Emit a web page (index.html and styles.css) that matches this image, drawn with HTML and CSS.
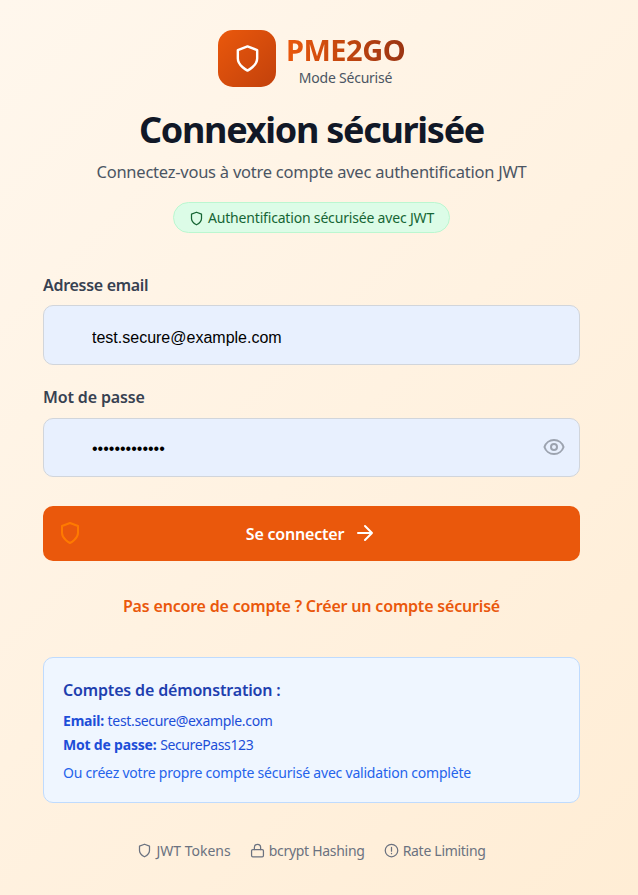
FILE: index.html
```html
<!DOCTYPE html>
<html lang="fr">
<head>
<meta charset="utf-8">
<title>PME2GO</title>
<link rel="stylesheet" href="styles.css">
</head>
<body>
<svg class="sprite" aria-hidden="true">
  <symbol id="shield" viewBox="0 0 24 24"><path d="M12 22s8-4 8-10V5l-8-3-8 3v7c0 6 8 10 8 10z"/></symbol>
</svg>
<main class="page">
  <header class="brand">
    <div class="logo"><svg class="icon"><use href="#shield"/></svg></div>
    <div class="brand-text">
      <div class="name"><span>PME2GO</span></div>
      <div class="mode"><span>Mode Sécurisé</span></div>
    </div>
  </header>
  <h1><span>Connexion sécurisée</span></h1>
  <p class="subtitle"><span>Connectez-vous à votre compte avec authentification JWT</span></p>
  <div class="badge"><svg class="icon"><use href="#shield"/></svg><span>Authentification sécurisée avec JWT</span></div>
  <form>
    <label class="label-email" for="email"><span>Adresse email</span></label>
    <div class="field"><input id="email" type="text" value="test.secure@example.com"></div>
    <label class="label-password" for="password"><span>Mot de passe</span></label>
    <div class="field password">
      <input id="password" type="password" value="SecurePass123">
      <svg class="icon eye" viewBox="0 0 24 24"><path d="M2.458 12C3.732 7.943 7.523 5 12 5s8.268 2.943 9.542 7c-1.274 4.057-5.064 7-9.542 7s-8.268-2.943-9.542-7z"/><circle cx="12" cy="12" r="3"/></svg>
    </div>
    <button type="button" class="submit">
      <svg class="icon lead"><use href="#shield"/></svg>
      <span>Se connecter</span>
      <svg class="icon arrow" viewBox="0 0 24 24"><path d="M5 12h14M12 5l7 7-7 7"/></svg>
    </button>
  </form>
  <div class="register"><span>Pas encore de compte ? Créer un compte sécurisé</span></div>
  <section class="demo">
    <h2><span>Comptes de démonstration :</span></h2>
    <p class="demo-email"><strong>Email:</strong> <span>test.secure@example.com</span></p>
    <p class="demo-password"><strong>Mot de passe:</strong> <span>SecurePass123</span></p>
    <p class="note"><span>Ou créez votre propre compte sécurisé avec validation complète</span></p>
  </section>
  <footer>
    <div class="tokens"><svg class="icon"><use href="#shield"/></svg><span>JWT Tokens</span></div>
    <div><svg class="icon" viewBox="0 0 24 24"><rect x="2.5" y="10.5" width="19" height="11.5" rx="2"/><path d="M7 10.5V7a5 5 0 0 1 10 0v3.5"/></svg><span>bcrypt Hashing</span></div>
    <div><svg class="icon" viewBox="0 0 24 24"><circle cx="12" cy="12" r="10"/><path d="M12 7v6M12 16.5v.5"/></svg><span>Rate Limiting</span></div>
  </footer>
</main>
</body>
</html>
```
FILE: styles.css
```css
* { box-sizing: border-box; }
body {
  margin: 0;
  min-height: 895px;
  background: linear-gradient(135deg, #fff7ed, #ffedd5);
  font-family: "Noto Sans", "Open Sans", sans-serif;
  color: #374151;
}
.sprite { display: none; }
.icon { fill: none; stroke: currentColor; stroke-width: 2; stroke-linecap: round; stroke-linejoin: round; flex: none; }
h1, h2, p { margin: 0; }
span { white-space: nowrap; }
.page { display: flex; flex-direction: column; height: 895px; padding: 30px 58px 0 43px; }
.brand { display: flex; justify-content: center; gap: 10px; height: 57px; }
.logo { width: 58px; height: 57px; border-radius: 15px; background: linear-gradient(135deg, #ea580c, #c2410c); display: flex; align-items: center; justify-content: center; color: #fff; }
.logo .icon { width: 29px; height: 29px; }
.brand-text { width: 119px; text-align: center; }
.name { font-size: 29px; line-height: 40px; font-weight: 700; letter-spacing: -0.5px; }
.name span { background: linear-gradient(90deg, #ea580c, #9a3412); -webkit-background-clip: text; background-clip: text; color: transparent; }
.mode { font-size: 14px; line-height: 16px; color: #4b5563; letter-spacing: -0.23px; }
h1 { margin-top: 19px; height: 48px; font-size: 36px; line-height: 48px; font-weight: 700; color: #111827; text-align: center; letter-spacing: -1.28px; }
.subtitle { margin-top: 6px; height: 24px; line-height: 24px; font-size: 16.5px; text-align: center; color: #4b5563; letter-spacing: -0.24px; }
.badge { align-self: center; display: flex; align-items: center; justify-content: center; gap: 4px; width: 277px; height: 31px; margin-top: 18px; border: 1px solid #bbf7d0; border-radius: 16px; background: #dcfce7; color: #166534; font-size: 14px; letter-spacing: -0.18px; }
.badge .icon { width: 15px; height: 15px; margin-top: 1px; }
form { display: block; }
label { display: block; height: 24px; line-height: 24px; font-size: 16px; font-weight: 600; color: #374151; letter-spacing: -0.3px; }
.label-email { margin-top: 40px; }
.label-password { margin-top: 20px; letter-spacing: -0.14px; }
.field { height: 60px; margin-top: 8px; border: 1px solid #d1d5db; border-radius: 10px; background: #e8f0fe; display: flex; align-items: center; padding: 6px 13px 0 48px; }
.password { height: 59px; margin-top: 9px; padding-top: 2px; }
.field input { flex: 1; min-width: 0; border: 0; padding: 0; background: transparent; outline: 0; font: 16px "Liberation Sans", sans-serif; color: #000; }
.eye { width: 24px; height: 24px; color: #9ca3af; margin-top: -3px; }
.submit { position: relative; display: flex; align-items: center; justify-content: center; gap: 9px; width: 100%; height: 55px; margin-top: 29px; padding: 0; border: 0; border-radius: 10px; background: #ea580c; color: #fff; font: 600 16px "Noto Sans", sans-serif; letter-spacing: -0.2px; }
.submit .icon { width: 24px; height: 24px; }
.submit .arrow { margin-top: -2px; }
.submit .lead { position: absolute; left: 15px; top: 15px; color: #ff7a00; }
.register { margin-top: 33px; height: 24px; line-height: 24px; text-align: center; font-size: 16px; font-weight: 600; color: #ea580c; letter-spacing: -0.19px; }
.demo { height: 146px; margin-top: 39px; padding: 20px 19px 0; border: 1px solid #bfdbfe; border-radius: 10px; background: #eff6ff; color: #1d4ed8; font-size: 14px; line-height: 24px; }
.demo strong { letter-spacing: -0.2px; }
.demo-email span { letter-spacing: -0.33px; }
.demo-password span { letter-spacing: -0.38px; }
h2 { font-size: 16px; line-height: 24px; font-weight: 600; color: #1e40af; margin-bottom: 7px; letter-spacing: -0.16px; }
.note { margin-top: 4px; color: #2563eb; letter-spacing: -0.21px; }
footer { display: flex; justify-content: center; gap: 19px; margin-top: 37px; color: #6b7280; font-size: 14px; line-height: 22px; letter-spacing: -0.29px; }
footer div { display: flex; align-items: center; gap: 4px; }
footer .tokens { letter-spacing: 0; }
footer .icon { width: 15px; height: 15px; margin-top: -2px; }
```
